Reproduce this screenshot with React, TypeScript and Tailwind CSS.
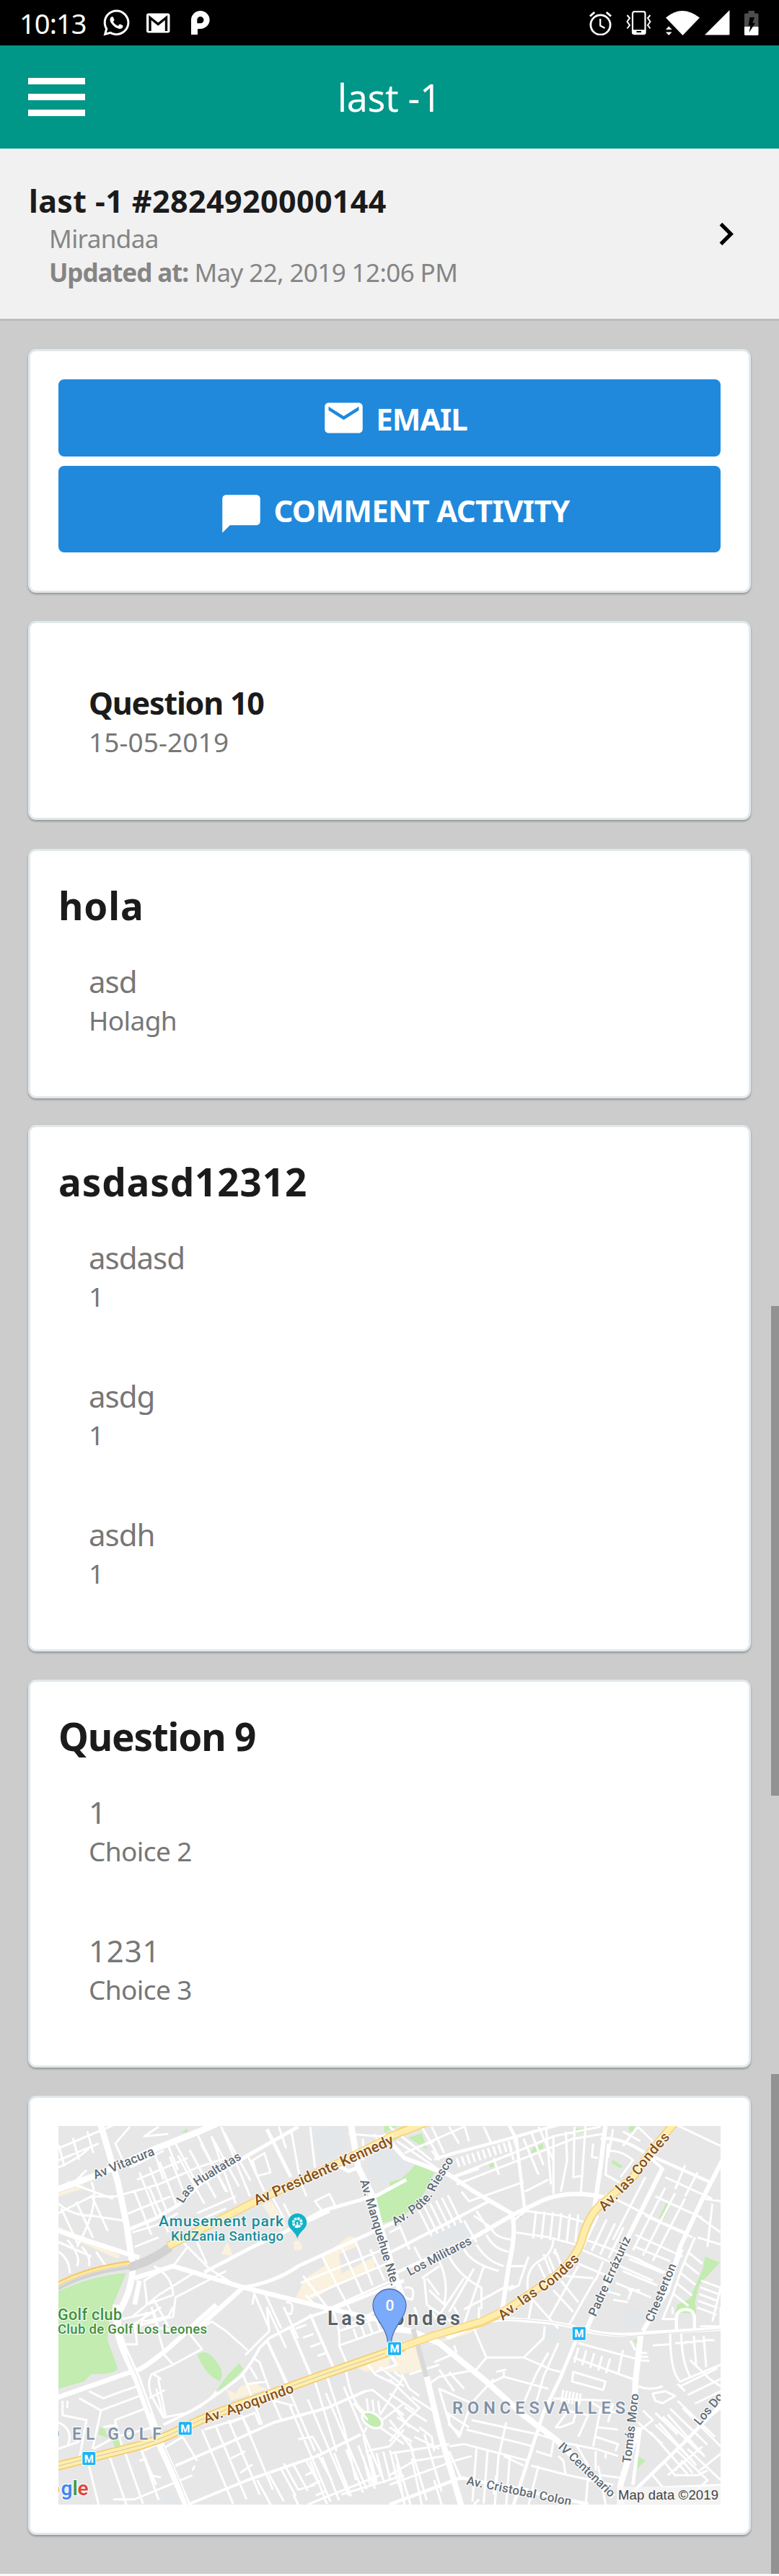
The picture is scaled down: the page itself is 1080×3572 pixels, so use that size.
import type { ReactNode } from "react";
import { FaWhatsapp } from "react-icons/fa";
import { MdChatBubble, MdEmail, MdKeyboardArrowRight } from "react-icons/md";

/* ---------- status bar ---------- */

function GmailIcon() {
  return (
    <svg width="33" height="28" viewBox="0 0 33 28">
      <rect x="0" y="0.5" width="32.5" height="27" rx="3" fill="#fff" />
      <path d="M5 25V6.5L16.2 15.5L27.5 6.5V25" fill="none" stroke="#000" strokeWidth="3.4" />
      <path d="M1.5 1.5L16.2 9.5L31 1.5" fill="#fff" />
    </svg>
  );
}

function PLogo() {
  return (
    <svg width="26" height="33" viewBox="0 0 26 33">
      <path
        fillRule="evenodd"
        d="M0 33V12.5A12.8 12.5 0 1 1 12.8 25H9V33ZM8.3 17.2H12.8A4.6 4.6 0 1 0 8.3 12.6Z"
        fill="#fff"
      />
    </svg>
  );
}

function AlarmIcon() {
  return (
    <svg width="31" height="34" viewBox="0 0 31 34" fill="none" stroke="#fff">
      <circle cx="15.5" cy="19.5" r="13.6" strokeWidth="2.8" />
      <path d="M15.2 11V20.5L21.5 24" strokeWidth="2.2" />
      <path d="M1 7.5L7.2 2M30 7.5L23.8 2" strokeWidth="3" />
    </svg>
  );
}

function VibrateIcon() {
  return (
    <svg width="35" height="35" viewBox="0 0 35 35" fill="none" stroke="#fff">
      <rect x="9" y="2.2" width="17.5" height="31" rx="2.5" strokeWidth="2.2" />
      <path d="M9 28H26.5V32H9Z" fill="#fff" strokeWidth="1.5" />
      <path d="M14.5 30H21" stroke="#000" strokeWidth="2" />
      <path d="M1.5 7L5 11L1.5 16L5 21L1.5 25.5M33.5 7L30 11L33.5 16L30 21L33.5 25.5" strokeWidth="2" />
    </svg>
  );
}

function WifiIcon() {
  return (
    <svg width="47" height="34" viewBox="0 0 47 34" fill="#fff">
      <path d="M0 9.5Q22.5 -9.5 47 9.5L23.5 34Z" />
      <path d="M-1 20L4.2 15L13 25L8 34H-1Z" fill="#000" />
      <path d="M4.3 21.5L8.6 26H0ZM4.3 34L8.6 29.5H0Z" />
    </svg>
  );
}

function BatteryIcon() {
  return (
    <svg width="20" height="34" viewBox="0 0 20 34">
      <path d="M5.5 0H14V3.5H18Q19.5 3.5 19.5 5V22H0V5Q0 3.5 1.5 3.5H5.5Z" fill="#4d4d4d" />
      <path d="M0 22H19.5V32.5Q19.5 34 18 34H1.5Q0 34 0 32.5Z" fill="#fff" />
      <path d="M7.5 9H14L11.3 17H15L6.5 30L8.5 20.5H5.5Z" fill="#000" />
    </svg>
  );
}

function StatusBar() {
  return (
    <div className="flex h-[63px] items-center justify-between bg-black pl-[27px] pr-7 text-white">
      <div className="flex items-center">
        <span className="w-[114px] pt-[2px] text-[38px] leading-[61px] tracking-[-0.9px]">10:13</span>
        <FaWhatsapp className="size-[41px]" />
        <span className="ml-[21px]">
          <GmailIcon />
        </span>
        <span className="ml-[29px]">
          <PLogo />
        </span>
      </div>
      <div className="flex items-center">
        <AlarmIcon />
        <span className="ml-5">
          <VibrateIcon />
        </span>
        <span className="ml-5">
          <WifiIcon />
        </span>
        <svg className="ml-[7px]" width="35" height="35" viewBox="0 0 35 35">
          <path d="M34.5 0V33.5Q34.5 34.5 33 34.5H0Z" fill="#fff" />
        </svg>
        <span className="ml-5">
          <BatteryIcon />
        </span>
      </div>
    </div>
  );
}

/* ---------- cards ---------- */

function Card({ children, className = "" }: { children: ReactNode; className?: string }) {
  return (
    <section
      className={`mx-[39px] rounded-[11px] border-[3px] border-[#e1e8ec] bg-white p-[39px] shadow-[0_2px_3px_rgba(0,0,0,0.28)] ${className}`}
    >
      {children}
    </section>
  );
}

function CardTitle({ children, tight = false }: { children: ReactNode; tight?: boolean }) {
  return (
    <h2
      className={`-mb-[3px] text-[53px] font-bold leading-[73px] text-[#1b1b1b] ${tight ? "tracking-[-1.2px]" : "tracking-[0.9px]"}`}
    >
      {children}
    </h2>
  );
}

function Item({ label, value, strong = false }: { label: string; value: string; strong?: boolean }) {
  const numeric = /^\d+$/.test(label);
  return (
    <div className="px-[42px] pb-[41px] pt-[43px]">
      <p
        className={
          strong
            ? "text-[43px] font-bold leading-[57px] tracking-[-1.2px] text-[#1b1b1b]"
            : `text-[42px] leading-[57px] text-[#777] ${numeric ? "tracking-[0.8px]" : "tracking-[-1px]"}`
        }
      >
        {label}
      </p>
      <p
        className={`text-[37px] leading-[51px] text-[#777] ${strong ? "tracking-[0.1px]" : "tracking-[-0.6px]"}`}
      >
        {value}
      </p>
    </div>
  );
}

/* ---------- map ---------- */

/** n parallel segments (vx, vy), the first at (x, y), each next one moved by (dx, dy). */
function hatch(x: number, y: number, dx: number, dy: number, vx: number, vy: number, n: number) {
  let d = "";
  for (let i = 0; i < n; i++) d += `M${x + dx * i} ${y + dy * i}l${vx} ${vy}`;
  return d;
}

const NW = "translate(-21 -19) scale(0.33333)";
const NE = "translate(459 -19) scale(0.34435 0.33333)";
const SW = "translate(-21 251) scale(0.33333)";
const SE = "translate(459 251) scale(0.34435 0.33333)";

function Roads({ at, w, d, color = "#fff" }: { at: string; w: number; d: string; color?: string }) {
  return (
    <g transform={at}>
      <path d={d} fill="none" stroke={color} strokeWidth={w} strokeLinejoin="round" />
    </g>
  );
}

function Area({ at, d, color }: { at: string; d: string; color: string }) {
  return (
    <g transform={at}>
      <path d={d} fill={color} />
    </g>
  );
}

function Label({
  x,
  y,
  len,
  size,
  color,
  angle = 0,
  weight = 500,
  children,
}: {
  x: number;
  y: number;
  len?: number;
  size: number;
  color: string;
  angle?: number;
  weight?: number;
  children: string;
}) {
  return (
    <text
      transform={`translate(${x} ${y}) rotate(${angle})`}
      fontSize={size}
      fontWeight={weight}
      fill={color}
      textLength={len}
      stroke="#fff"
      strokeOpacity="0.8"
      strokeWidth="2.5"
      paintOrder="stroke"
    >
      {children}
    </text>
  );
}

function CurvedLabel({
  id,
  d,
  size,
  color,
  len,
  children,
}: {
  id: string;
  d: string;
  size: number;
  color: string;
  len: number;
  children: string;
}) {
  return (
    <>
      <path id={id} d={d} fill="none" />
      <text
        fontSize={size}
        fontWeight="500"
        fill={color}
        stroke="#fff"
        strokeOpacity="0.8"
        strokeWidth="2.5"
        paintOrder="stroke"
      >
        <textPath href={`#${id}`} textLength={len}>
          {children}
        </textPath>
      </text>
    </>
  );
}

function Metro({ x, y }: { x: number; y: number }) {
  return (
    <g transform={`translate(${x} ${y})`}>
      <rect x="-10" y="-10" width="20" height="20" rx="2" fill="#fff" />
      <rect x="-9" y="-9" width="18" height="18" rx="1.5" fill="#1eb4f5" />
      <text y="5.5" fontSize="15" fontWeight="700" fill="#fff" textAnchor="middle">
        M
      </text>
    </g>
  );
}

const GREEN = "#c2ecb0";
const BEIGE = "#faf2de";
const WATER = "#e3e7ea";
const STREET = "#5f6b75";
const AVENUE = "#87501a";
const DISTRICT = "#8292a8";

function StreetMap() {
  return (
    <svg className="block h-[525px] w-[918px] font-[Roboto]" viewBox="0 0 918 525">
      <rect width="918" height="525" fill="#e7e7e7" />

      {/* parks, plazas and commercial areas */}
      <Area at={NW} color={GREEN} d="M63 745Q200 680 345 668L290 800L268 900V920H63ZM1380 350L1500 280V440L1410 460ZM1415 55H1480L1420 85ZM575 85L600 65V85ZM1205 815L1255 790L1240 810Z" />
      <Area at={NW} color={WATER} d="M1115 100L1200 50H1260L1250 160L1150 200ZM1350 250Q1350 160 1440 140L1500 190V280H1400ZM820 430L930 380L950 460L830 500Z" />
      <Area at={NW} color={BEIGE} d="M910 385L950 370L1010 470L985 490ZM740 590L765 540L790 598ZM1040 540Q1075 520 1075 570L1045 575ZM1050 770L1090 690L1170 640L1160 600L1270 515L1300 520V560L1230 590L1240 670L1380 600V650L1200 730L1100 790ZM63 335L165 300L170 315L63 350ZM63 475L320 595L310 610L63 500Z" />
      <Area at={NE} color={GREEN} d="M0 290Q70 270 105 215L180 250Q130 380 60 425L0 440ZM75 105L130 88L152 155ZM580 148L618 130V150L562 175ZM750 68H795V80L750 88ZM965 58H990L980 84L963 74ZM900 198L940 225L930 232L893 212ZM400 212L420 208V228L404 230ZM1115 375L1130 385L1105 445L1085 440ZM1270 600L1330 625L1280 680L1245 720L1230 790L1235 840L1150 830L1160 800L1210 775L1262 650ZM510 440L535 425L530 440Z" />
      <Area at={NE} color={WATER} d="M0 150L100 215L50 275L0 290ZM165 500L290 450L330 500L200 560ZM945 860L960 810L1050 830L1010 895H950Z" />
      <Area at={SW} color={GREEN} d="M63 0H270L268 140L310 255Q290 285 200 278L170 310L63 340ZM640 200Q680 165 725 235Q755 270 735 308Q680 290 640 200ZM718 355Q745 300 815 235L832 258Q790 310 718 355ZM235 500L255 505L262 530L320 550L325 585L300 590L285 550L228 530Z" />
      <Area at={SW} color={BEIGE} d="M760 340L800 360L820 330L880 310L900 330L935 340L780 390ZM1300 250L1440 200V250L1340 270ZM1420 270L1500 200V270Z" />
      <Area at={SW} color={WATER} d="M1195 290H1240V330L1205 345ZM500 770L550 765L560 822H510Z" />
      <Area at={SE} color={BEIGE} d="M30 190L110 155L135 260L45 280L20 240ZM130 170L350 80L400 70L320 110Z" />
      <Area at={SE} color={GREEN} d="M980 138L1002 132L1000 160ZM1000 620L1030 640L997 672ZM608 520L625 530L612 537Z" />
      <Area at={SE} color={WATER} d="M630 80H700L660 150L632 130Z" />
      <g transform={SW}>
        <ellipse cx="1368" cy="470" rx="46" ry="28" transform="rotate(32 1368 470)" fill={GREEN} stroke="#fff" strokeWidth="10" />
      </g>

      {/* side streets, north west */}
      <Roads
        at={NW}
        w={9}
        d={
          hatch(75, 400, 62, -28, 70, 150, 3) +
          hatch(400, 250, 42, -22, 70, 180, 4) +
          hatch(560, 180, 48, -24, 110, 200, 5) +
          hatch(63, 135, 60, -28, 25, 90, 3) +
          "M63 200L230 130M63 150L300 50M63 230Q150 190 190 150M140 280L180 240M63 380Q120 430 200 430L330 450M63 420L200 350L300 350M200 290Q240 380 140 560M100 290L290 360" +
          "M300 350L480 300L640 230L760 190M330 430L530 350M370 500L470 470L560 420M380 560L480 520M360 230L500 160M390 280L600 190M640 420L800 350M600 470L760 400M360 60L300 130L340 220" +
          "M460 160L500 280M520 140L560 240M480 60L420 100L520 90M540 110L640 300M380 330L450 510M440 310L520 500M500 450L480 400M640 90L760 330M740 60L860 350M700 100L800 380" +
          "M850 180L920 330M870 200L920 170L945 250L890 265ZM1030 70L1070 290L1095 350M1110 60L1130 230M980 60L1010 150M1130 370L1190 340L1215 390L1160 410ZM1000 380L1040 460M940 330L1000 440" +
          "M63 540L200 600M100 530Q160 600 140 640M160 560Q200 600 190 640M220 580L260 640M63 580Q110 610 110 670" +
          "M540 640L600 560L690 650M600 560L560 520M640 540L680 630M640 660L480 760L370 850M760 660L550 770L540 850L350 900M430 780L420 700L490 660Q540 700 540 760L430 800ZM500 660L460 640M690 650L800 720" +
          "M880 760L940 900M920 750L990 900M870 800L880 740M1010 790Q1050 790 1030 840L1010 835M1080 680L1180 810M1160 600L1280 830M1240 560L1330 760M1300 540L1370 720M1360 570L1420 700" +
          "M1070 710L1440 560M1100 770L1450 620M1180 820L1450 700M1260 890L1380 830M1130 800L1090 760M1270 90L1400 100L1500 70M1330 110V200M1380 90L1400 150" +
          "M330 860L460 830L480 900M460 780L520 890"
        }
      />
      {/* side streets, north east */}
      <Roads
        at={NE}
        w={9}
        d={
          hatch(115, 400, 24, -11, 55, 115, 6) +
          hatch(270, 190, 21, -7, 12, 38, 12) +
          hatch(590, 410, 34, 3, -12, 115, 6) +
          hatch(840, 430, 34, 16, -60, 130, 5) +
          hatch(1030, 270, 40, 22, -130, 260, 5) +
          hatch(1110, 270, -40, 80, 190, 90, 5) +
          hatch(990, 560, -26, 50, 140, 60, 4) +
          hatch(1200, 580, -14, 44, 60, 50, 5) +
          hatch(1255, 700, -4, 28, 78, 30, 5) +
          hatch(620, 590, 45, -22, 30, 80, 2) +
          "M130 60L200 190M170 60L220 170M240 60L280 130M300 50L320 120M380 60L410 130M60 170L300 60M30 120L200 240M100 150L180 120M0 60L170 200" +
          "M250 270L520 160L660 100L850 60M270 300L520 200L740 110L860 90M290 330L320 370L540 290M260 270L360 235M420 190L440 260M400 210L500 170M545 330L640 280" +
          "M540 110L600 260M570 80L620 220M600 60L660 200M630 60L650 300M660 100V340M710 80L715 200L690 330M745 60L740 270L770 265M790 50L770 340M820 130L815 185L840 190M880 130L870 260L940 300" +
          "M900 70L880 190M940 80L1010 120M1000 60L940 140M880 160Q940 160 980 200L930 270M1060 120L1000 60M1150 50L1333 140M1190 220L1150 320M1240 250L1190 350M1290 290L1240 400" +
          "M550 410L690 430L780 455M510 500L640 520L750 550M660 520Q660 590 600 620Q540 660 560 760L680 900M470 640L550 640M500 450L560 400M640 600L680 700M600 630L640 720M680 600L660 580" +
          "M340 430L410 480Q420 520 490 530M390 510Q420 570 480 580M350 550Q390 620 460 640M300 570Q330 630 440 660M240 600Q280 680 370 730V820M200 620Q240 700 220 800L160 740M130 690L200 640M140 690L150 800L260 880" +
          "M380 640L300 880M340 650L240 830M300 690L190 860M150 690L200 760M300 450L350 540M350 410L400 490M40 470L80 570M0 500L40 480M100 560L130 620M60 730Q110 720 90 780L60 770" +
          "M790 530L1000 610L1080 660M770 570L950 650L1060 700M760 630L900 690M700 680L820 690M690 700L760 790M660 740L740 830M830 690L720 890M760 640L640 860M580 750L560 860M960 780L980 730M860 620L830 700M900 780L960 790" +
          "M1333 370L1270 360M1300 380L1280 560M1240 430L1333 500M1240 520L1333 550M1180 570L1130 700M1230 520L1180 640L1140 760L1100 860L1150 860M1333 730L1300 870M1250 890H1333M960 740L1010 740M860 740L930 760M870 340L1100 460L1190 500" +
          "M480 130L500 200M170 160L200 200M480 740L520 720L560 600M460 740L500 720M300 820L460 730"
        }
      />
      {/* side streets, south west */}
      <Roads
        at={SW}
        w={9}
        d={
          hatch(660, 510, 55, -20, 130, 310, 4) +
          hatch(890, 720, 50, -22, 60, 110, 6) +
          hatch(1110, 640, 50, -16, 70, 180, 5) +
          hatch(1025, 410, 75, -26, 170, 400, 4) +
          hatch(275, 620, 65, -16, 75, 215, 3) +
          hatch(1290, 90, 32, -12, 16, 46, 6) +
          hatch(1050, 90, 30, 38, 44, -16, 4) +
          hatch(1330, 620, 28, -6, 30, 120, 5) +
          hatch(1090, 700, 22, 42, 40, -18, 3) +
          hatch(1345, 380, 24, 5, 6, 50, 3) +
          "M63 480Q130 510 100 580M63 590L150 560M80 390L80 450L180 470L150 630M100 390V420M150 380L240 430L205 590M190 350L250 380L330 350L390 330M240 430L400 370M250 500L300 490V470L430 420M210 590L300 540L460 500M300 480L330 590" +
          "M330 155H390L380 70L490 0M390 110L430 20M420 60L520 40L540 0M440 80L620 110L700 60L760 100L850 180M600 100L660 175L540 240L450 280Q430 320 450 370L500 460L600 440Q680 410 720 350M500 460L470 340M480 290V310L510 460M540 240L505 200L480 110L450 0" +
          "M440 380L505 345M460 280L490 300M930 0L940 100L840 200M870 210L900 230L960 400L990 470M830 280L870 380L910 490M860 250L890 300M850 320L930 310M900 490L880 440L780 480M670 510L830 460L860 520M550 660L760 570M800 540L790 520" +
          "M410 600L470 740M400 640L430 630M480 600L580 540L640 640M190 660L230 822M290 800L380 800L620 700M500 560L410 600M450 700L490 710M780 630L840 600M620 680L630 660M820 690L870 655M950 180L1130 600M1200 0Q1240 100 1230 160L1270 250" +
          "M1230 100L1380 50L1500 60M1230 160L1430 90M1000 0L1060 130M930 0L1010 170M1180 290L1250 500L1300 720M1130 310L1220 600M1260 270Q1280 400 1340 440M1340 350L1370 345L1500 450M1180 420L1340 350M1500 290L1400 450M1480 330L1380 280L1350 240" +
          "M1400 500L1500 570M1410 470L1500 400M1330 530L1345 500M1330 530L1380 740M1340 600L1440 580L1500 510M1460 680L1500 800M1240 780L1500 700M1100 822L1400 700M1290 400L1350 470M1400 250L1500 330M1380 270L1470 240L1450 200M1460 270L1500 300" +
          "M960 390L1040 410M1060 550L1120 540L1160 610M1000 650L1060 760L1130 740M1040 780L1060 822"
        }
      />
      {/* side streets, south east */}
      <Roads
        at={SE}
        w={9}
        d={
          hatch(760, 170, 32, 11, -16, 62, 5) +
          hatch(1160, 390, -30, 33, 150, 150, 4) +
          hatch(1050, 520, 35, -36, 150, 175, 3) +
          hatch(1170, 330, 30, 36, 150, -75, 3) +
          hatch(1225, 120, 40, 0, 10, 130, 2) +
          hatch(700, 345, 14, 3, -8, 50, 6) +
          hatch(1150, 150, 38, -4, 44, 0, 4) +
          hatch(1000, 190, 4, 16, 38, 2, 3) +
          hatch(20, 600, 60, -36, 70, 240, 3) +
          hatch(0, 500, 30, -42, 90, 60, 4) +
          hatch(350, 590, 45, 8, -16, 220, 4) +
          "M340 90L390 210L350 260L200 290L160 320M390 210L540 210L650 260L690 270M540 210L620 130L625 80M640 190L590 280L540 400M680 150L620 290L590 400M180 230L270 190M200 260L260 350M240 270L300 340M270 190L260 160" +
          "M0 300L120 420L80 460L0 560M0 360L100 430M50 280L80 340L120 370M80 280L200 240M0 470L100 600M20 420L80 500M120 500L170 540L180 600M100 540L200 590M0 610L240 570" +
          "M200 340L330 400L280 540L240 480ZM230 440L320 500M240 440V490L290 530M330 470L600 530L690 560M310 510L580 580M240 580L300 570L560 640M330 400L420 300M400 320L460 290L640 340M470 480L440 620M430 270L470 260M460 290V270" +
          "M740 210L980 300M760 150L990 215M740 270L870 310L860 345L735 310ZM660 380L890 390M700 430L800 450L760 540M670 500L720 430L750 440L740 480L690 500ZM800 390L850 420L820 580M850 420L910 440M900 400L880 480M840 500L920 510" +
          "M590 600L650 620L660 560L730 570L830 590L920 620M830 540L920 570L910 600M750 570L800 660L790 690M570 660L720 700L900 740M710 700L700 640L680 620M600 660L560 822M800 700L790 822M850 700L930 710M840 660L870 822M830 600V680M870 610V630" +
          "M1130 110Q1130 270 1170 310L1333 240M1175 110Q1175 220 1210 290M1160 320L1190 350M1333 330L1290 300L1210 220M1060 360L1110 350L1150 370L1100 400L1070 390ZM1000 330Q1050 350 1100 330M1060 160L1130 155M940 180L920 280M970 140L990 180" +
          "M1020 430L1060 470L1000 520M1000 480L1100 570M1070 440L1160 530M1180 420L1333 580M1240 500L1333 420M1160 600L1280 720L1240 760M1110 650L1150 700L1240 700L1280 680M1150 680L1180 640L1220 690M1060 700L1100 750L1333 740M1200 590L1333 720M1260 580L1180 650L1120 700M1333 610L1250 680" +
          "M0 700L100 640L220 620M0 740L260 640L330 620M30 650L60 822M90 630L130 822M180 720L210 822M0 822L280 710L560 760M430 700L420 780M460 620L540 660M360 800L340 822M240 600L290 720" +
          "M1140 0V30M0 200L30 240L0 250M0 30L60 60M100 0L120 60M160 0L200 70M260 0L280 40M360 0V50M1333 0V80"
        }
      />

      {/* larger streets */}
      <Roads at={NW} w={26} d="M55 322L220 262L470 150L660 75L760 30M235 40L310 290L345 460L372 640Q370 740 315 830L305 910M1280 50L1310 230L1370 350L1400 470L1450 640L1500 790" />
      <Roads at={NW} w={20} d="M55 490L200 540L400 605M380 690L540 640L820 725L1200 820L1500 885M640 900L830 730M400 700L380 800" />
      <Roads at={NW} w={15} d="M350 490L470 440L570 380L650 300L850 180L1060 60M930 70L1030 270M820 730Q960 710 1060 640L1300 530L1510 435M670 665L870 560L1000 500L1160 410L1300 370L1390 345L1510 280M870 560L1190 410M1310 230L1270 245L1230 225M1200 820L1500 700" />
      <Roads at={NE} w={18} d="M0 120L60 190L240 260L340 330L490 420Q515 480 480 640L450 850M340 520L500 425L620 365Q730 320 870 355M870 50L850 220L825 400M1100 230L970 500L870 720L795 900M1340 200L1260 360L1170 560L1120 740L1020 910" />
      <Roads at={NE} w={13} d="M180 195L260 170L480 110L720 40M480 50L510 110L545 410M-10 590L160 500L400 370M0 680L340 520M850 110Q930 100 1030 170L1100 235M1030 170L1160 230L1290 290M1155 910V860Q1155 820 1193 820Q1228 820 1228 860V910" />
      <Roads at={SW} w={32} d="M305 -10Q300 110 345 200L390 300L440 440L490 580L540 690L600 830" />
      <Roads at={SW} w={20} d="M55 378L350 275L400 260Q500 200 640 60L720 -10" />
      <Roads at={SW} w={12} d="M500 490L620 430Q720 370 820 290Q870 230 900 170L940 130L1110 40L1200 10M930 140L1020 330M1110 30L1210 260M1030 90L1115 290M550 660L760 570L960 480L1180 420L1340 350M600 822L850 720L1140 620L1320 530" />
      <Roads at={SE} w={24} d="M0 90L90 100L200 150L390 310L540 450L680 560L900 790M150 290L205 530L290 830M1012 110L990 310L985 440M1000 500L930 740V822" />
      <Roads at={SE} w={14} d="M750 140L690 290L620 440L500 822M1340 400L1190 560L1000 750L960 800M0 822L290 710L800 820M1010 500L980 740" />
      <Roads at={SE} w={17} d="M230 130L350 75Q420 40 540 55Q700 65 760 90Q900 130 1040 108L1340 90" />
      <Roads at={SE} w={2} color="#cfcfcf" d="M350 72Q420 45 540 52Q700 65 760 90Q900 134 1040 116L1340 92" />
      <Roads at={SE} w={20} color="#dadada" d="M95 90L148 290" />
      <Roads at={SW} w={3} color="#e0e0e0" d="M350 200L395 300L445 440M500 580L550 690L605 830" />

      {/* highways */}
      <Roads at={NW} w={36} color="#d2d2d2" d="M355 645Q440 625 528 560" />
      <Roads at={NW} w={14} color="#d2d2d2" d="M55 738Q180 665 365 645" />
      <Roads at={NW} w={17} color="#f3c566" d="M55 717Q180 648 360 626" />
      <Roads at={NW} w={10} color="#ffe9a0" d="M55 719Q180 650 360 628" />
      <Roads at={NW} w={34} color="#f6d27e" d="M520 556L880 372L1240 205L1520 65" />
      <Roads at={NW} w={25} color="#ffeeaa" d="M520 556L880 372L1240 205L1520 65" />
      <Roads at={NE} w={34} color="#f6d27e" d="M-10 105L180 30M1150 40L1040 180L980 270L850 385Q800 430 775 530Q740 640 600 730L460 830L370 875L220 915" />
      <Roads at={NE} w={24} color="#ffeeaa" d="M-10 105L180 30M1150 40L1040 180L980 270L850 385Q800 430 775 530Q740 640 600 730L460 830L370 875L220 915" />
      <Roads at={SW} w={38} color="#f3cb74" d="M50 664L340 592Q480 560 590 500Q700 445 900 377L1150 287L1500 165" />
      <Roads at={SW} w={28} color="#ffeeaa" d="M50 664L340 592Q480 560 590 500Q700 445 900 377L1150 287L1500 165" />
      <Roads at={SW} w={3} color="#c9c4b4" d="M50 664L340 592Q480 560 590 500Q700 445 900 377L1150 287L1440 186" />
      <Roads at={SE} w={32} color="#f6d27e" d="M-20 192L180 118L370 60L480 5" />
      <Roads at={SE} w={24} color="#ffeeaa" d="M-20 192L180 118L370 60L480 5" />

      {/* street names */}
      <Label x={51} y={74} len={90} size={17.5} angle={-22.4} color={STREET}>Av Vitacura</Label>
      <CurvedLabel id="hualtatas" d="M173 108Q182 90 199 79L262 41" size={17} len={104} color={STREET}>Las Hualtatas</CurvedLabel>
      <Label x={274.5} y={110.5} len={210} size={20.5} angle={-24.2} color={AVENUE}>Av Presidente Kennedy</Label>
      <Label x={418} y={76} len={153} size={17} angle={73.4} color={STREET}>Av. Manquehue Nte.</Label>
      <CurvedLabel id="riesco" d="M467 139L497 119Q517 104 524 86L556 34" size={17} len={125} color={STREET}>Av. Pdte. Riesco</CurvedLabel>
      <Label x={487} y={208} len={98} size={17} angle={-27.4} color={STREET}>Los Militares</Label>
      <CurvedLabel id="condesN" d="M757 119Q788 88 808 65Q822 43 860 4" size={19.5} len={138} color={AVENUE}>Av. las Condes</CurvedLabel>
      <CurvedLabel id="condesS" d="M616 270Q650 243 676 227Q705 207 734 172" size={19.5} len={137} color={AVENUE}>Av. las Condes</CurvedLabel>
      <Label x={745} y={265} len={119} size={17} angle={-66} color={STREET}>Padre Errázuriz</Label>
      <Label x={824} y={273} len={86} size={17} angle={-67.5} color={STREET}>Chesterton</Label>
      <Label x={204} y={412.5} len={131} size={19.5} angle={-19.4} color={AVENUE}>Av. Apoquindo</Label>
      <Label x={793.5} y={468} len={97} size={17} angle={-83.5} color={STREET}>Tomás Moro</Label>
      <Label x={889} y={416} size={17} angle={-50} color={STREET}>Los Do</Label>
      <Label x={692} y={446} len={101} size={17} angle={43.5} color={STREET}>IV Centenario</Label>
      <Label x={565} y={497} len={148} size={17} angle={11.5} color={STREET}>Av. Cristobal Colon</Label>

      {/* places and districts */}
      <Label x={139} y={138.7} len={173} size={21} color="#178c99">Amusement park</Label>
      <Label x={156} y={158.7} len={156} size={18.5} color="#178c99">KidZania Santiago</Label>
      <Label x={-1} y={268.7} len={89} size={21.5} color="#3f8f3f">Golf club</Label>
      <Label x={-1} y={287.7} len={207} size={18.5} color="#3f8f3f">Club de Golf Los Leones</Label>
      <Label x={-14} y={435.3} size={23} weight={600} color={DISTRICT}>O</Label>
      <Label x={19} y={435.3} len={124} size={23} weight={600} color={DISTRICT}>EL GOLF</Label>
      <Label x={546} y={398.7} len={240} size={23.5} weight={600} color={DISTRICT}>RONCESVALLES</Label>
      <Label x={373} y={276} len={184} size={27} weight={600} color="#56616b">Las Condes</Label>

      <path d="M331.3 121.3A13 13 0 0 1 344.3 134.3C344.3 143 334 146 331.3 156C328.6 146 318.3 143 318.3 134.3A13 13 0 0 1 331.3 121.3Z" fill="#12b2c6" />
      <circle cx="331.3" cy="134" r="5.6" fill="none" stroke="#fff" strokeWidth="3.6" strokeDasharray="3.2 1.1" />
      <path d="M331.3 133V141" stroke="#fff" strokeWidth="2" />

      <Metro x={175.7} y={419.3} />
      <Metro x={42.3} y={461} />
      <Metro x={721.7} y={287.7} />
      <path
        d="M459 226A23 23 0 0 1 482 249C482 266 462 280 461.5 300H456.5C456 280 436 266 436 249A23 23 0 0 1 459 226Z"
        fill="#7baafb"
        stroke="#4d6fae"
        strokeWidth="1.3"
      />
      <text x="459.5" y="256" fontSize="21" fontWeight="500" fill="#fff" textAnchor="middle">0</text>
      <Metro x={466} y={308.7} />

      {/* attribution */}
      <g fontSize="28" fontWeight="600" stroke="#fff" strokeWidth="2" paintOrder="stroke">
        <text x="-13.5" y="512" fill="#f4b400">o</text>
        <text x="3.5" y="512" fill="#4285f4">g</text>
        <text x="19.5" y="512" fill="#3c9a50">l</text>
        <text x="26.5" y="512" fill="#e2453c">e</text>
      </g>
      <rect x="774" y="500" width="144" height="25" fill="#f7f7f7" fillOpacity="0.75" />
      <text x="776" y="517.5" fontSize="18.5" textLength="139" fill="#444" className="font-['Liberation_Sans']">
        Map data ©2019
      </text>
    </svg>
  );
}

/* ---------- page ---------- */

export default function App() {
  return (
    <div className="relative h-[3572px] w-[1080px] overflow-hidden bg-[#fafafa] font-['Noto_Sans',sans-serif]">
      <div className="h-[3569px] bg-[#ccc]">
        <StatusBar />

        <header className="grid h-[143px] grid-cols-[1fr_auto_1fr] items-center bg-[#009688] pl-[39px] text-white">
          <div className="flex flex-col gap-[13px]">
            <span className="h-[9px] w-[79px] bg-white" />
            <span className="h-[9px] w-[79px] bg-white" />
            <span className="h-[9px] w-[79px] bg-white" />
          </div>
          <h1 className="pr-10 text-[52px] leading-[70px] tracking-[-0.4px]">last -1</h1>
        </header>

        <div className="flex h-[239px] items-center justify-between border-b-[3px] border-[#bbbbc0] bg-[#f1f1f1] pl-10 pr-[42px]">
          <div className="pt-[2px]">
            <p className="text-[43px] font-bold leading-[57px] tracking-[0.4px] text-[#1b1b1b]">
              last -1 #2824920000144
            </p>
            <div className="pl-7 text-[35px] leading-[47px] tracking-[-0.6px] text-[#858585]">
              <p>Mirandaa</p>
              <p>
                <span className="font-bold tracking-[-1.1px]">Updated at:</span> May 22, 2019 12:06 PM
              </p>
            </div>
          </div>
          <MdKeyboardArrowRight className="size-[63px] text-black" />
        </div>

        <Card className="mt-[39px] pb-[53px]">
          <div className="flex h-[107px] items-center justify-center gap-[13px] rounded-[8px] bg-[#2089dc] pl-[13px] text-[42px] font-bold tracking-[-1.1px] text-white">
            <MdEmail className="size-[63px]" />
            <span className="pt-[2px]">EMAIL</span>
          </div>
          <div className="mt-[13px] flex h-[120px] items-center justify-center gap-[13px] rounded-[8px] bg-[#2089dc] pl-[13px] text-[42px] font-bold tracking-[-0.7px] text-white">
            <MdChatBubble className="mt-[13px] size-[63px]" />
            <span className="pt-[3px]">COMMENT ACTIVITY</span>
          </div>
        </Card>

        <Card className="mt-[39px]">
          <Item label="Question 10" value="15-05-2019" strong />
        </Card>

        <Card className="mt-[40px]">
          <CardTitle>hola</CardTitle>
          <Item label="asd" value="Holagh" />
        </Card>

        <Card className="mt-[37px]">
          <CardTitle>asdasd12312</CardTitle>
          <Item label="asdasd" value="1" />
          <Item label="asdg" value="1" />
          <Item label="asdh" value="1" />
        </Card>

        <Card className="mt-[39px]">
          <CardTitle tight>Question 9</CardTitle>
          <Item label="1" value="Choice 2" />
          <Item label="1231" value="Choice 3" />
        </Card>

        <Card className="mt-[39px]">
          <StreetMap />
        </Card>
      </div>

      {/* scroll indicators over the page's right edge */}
      <div className="absolute right-0 top-[1811px] h-[679px] w-[11px] bg-[#929292]" />
      <div className="absolute right-0 top-[2876px] h-[693px] w-[11px] bg-[#929292]" />
    </div>
  );
}
